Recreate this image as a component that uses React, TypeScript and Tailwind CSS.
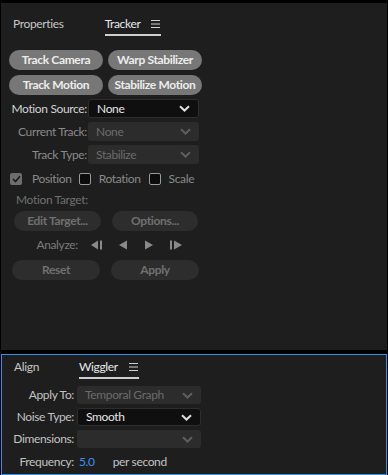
import React from "react";

const font = { fontFamily: "Lato, 'Open Sans', sans-serif", letterSpacing: "-0.35px" };

function Chevron({ color }: { color: string }) {
  return (
    <svg width="11" height="7" viewBox="0 0 11 7" className="shrink-0">
      <path d="M1 1.2 L5.5 5.5 L10 1.2" fill="none" stroke={color} strokeWidth="2" />
    </svg>
  );
}

function Hamburger() {
  return (
    <svg width="9" height="8" viewBox="0 0 9 8" className="ml-[11px]">
      <path d="M0 0.5H9M0 4H9M0 7.5H9" stroke="#cfcfcf" strokeWidth="1" />
    </svg>
  );
}

function Select({ value, disabled, width, height }: { value: string; disabled?: boolean; width: string; height: string }) {
  return (
    <div
      className={
        "rounded-[3px] flex items-center justify-between pl-[8px] pr-[8px] text-[12px] " +
        width +
        " " +
        height +
        (disabled
          ? " bg-[#2c2c2c] text-[#6b6b6b]"
          : " bg-[#0f0f0f] border border-[#2e2e2e] text-[#e6e6e6]")
      }
    >
      <span>{value}</span>
      <Chevron color={disabled ? "#5e5e5e" : "#e0e0e0"} />
    </div>
  );
}

function PillButton({ label, disabled, width }: { label: string; disabled?: boolean; width: string }) {
  return (
    <div
      className={
        "h-[20px] rounded-full flex items-center justify-center text-[12px] font-bold " +
        width +
        (disabled ? " bg-[#2d2d2d] text-[#707070]" : " bg-[#777777] text-[#ececec]")
      }
    >
      {label}
    </div>
  );
}

function Check({ checked }: { checked?: boolean }) {
  return checked ? (
    <div className="w-[12px] h-[12px] rounded-[2px] bg-[#6e6e6e] flex items-center justify-center">
      <svg width="9" height="8" viewBox="0 0 9 8">
        <path d="M1 4 L3.5 6.5 L8 1.2" fill="none" stroke="#1a1a1a" strokeWidth="1.6" />
      </svg>
    </div>
  ) : (
    <div className="w-[12px] h-[12px] rounded-[2px] bg-[#0c0c0c] border border-[#9a9a9a]" />
  );
}

export default function App() {
  return (
    <div className="w-[388px] h-[475px] bg-black flex flex-col pt-[3px]" style={font}>
      {/* Tracker panel */}
      <div className="h-[347px] mx-[1px] bg-[#1e1e1e] flex flex-col">
        <div className="flex items-end h-[33px] pl-[12px]">
          <div className="text-[12px] text-[#c6c6c6] pb-[3px]">Properties</div>
          <div className="ml-[41px] flex items-center border-b-2 border-[#cfcfcf] pb-[1px] pr-[1px]">
            <span className="text-[12px] text-[#e8e8e8]">Tracker</span>
            <Hamburger />
          </div>
        </div>

        <div className="flex flex-col gap-[5px] pl-[8px] mt-[14px]">
          <div className="flex gap-[5px]">
            <PillButton label="Track Camera" width="w-[94px]" />
            <PillButton label="Warp Stabilizer" width="w-[94px]" />
          </div>
          <div className="flex gap-[5px]">
            <PillButton label="Track Motion" width="w-[94px]" />
            <PillButton label="Stabilize Motion" width="w-[94px]" />
          </div>
        </div>

        <div className="flex flex-col gap-[4px] mt-[4px]">
          <div className="flex items-center">
            <div className="w-[87px] text-right pr-[1px] text-[12px] text-[#d2d2d2]">Motion Source:</div>
            <Select value="None" width="w-[111px]" height="h-[19px]" />
          </div>
          <div className="flex items-center">
            <div className="w-[87px] text-right pr-[1px] text-[12px] text-[#8a8a8a]">Current Track:</div>
            <Select value="None" disabled width="w-[111px]" height="h-[19px]" />
          </div>
          <div className="flex items-center">
            <div className="w-[87px] text-right pr-[1px] text-[12px] text-[#8a8a8a]">Track Type:</div>
            <Select value="Stabilize" disabled width="w-[111px]" height="h-[19px]" />
          </div>
        </div>

        <div className="flex items-center pl-[9px] mt-[6px] text-[12px] text-[#8a8a8a]">
          <Check checked />
          <span className="ml-[10px]">Position</span>
          <span className="ml-[7px]"><Check /></span>
          <span className="ml-[8px]">Rotation</span>
          <span className="ml-[8px]"><Check /></span>
          <span className="ml-[8px]">Scale</span>
        </div>

        <div className="pl-[15px] mt-[3px] text-[12px] text-[#6f6f6f]">Motion Target:</div>

        <div className="flex gap-[11px] pl-[13px] mt-[2px]">
          <PillButton label="Edit Target..." disabled width="w-[87px]" />
          <PillButton label="Options..." disabled width="w-[86px]" />
        </div>

        <div className="flex items-center mt-[5px] h-[18px]">
          <div className="w-[77px] text-right text-[12px] text-[#7a7a7a]">Analyze:</div>
          <svg width="100" height="12" viewBox="0 0 100 12" className="ml-[13px]">
            <g fill="#8a8a8a">
              <path d="M0 6 L7 1.5 L7 10.5 Z" />
              <rect x="9" y="1.5" width="2" height="9" />
              <path d="M28 6 L36 1.5 L36 10.5 Z" />
              <path d="M54 1.5 L54 10.5 L62 6 Z" />
              <rect x="79" y="1.5" width="2" height="9" />
              <path d="M83 1.5 L83 10.5 L91 6 Z" />
            </g>
          </svg>
        </div>

        <div className="flex gap-[11px] pl-[11px] mt-[6px]">
          <PillButton label="Reset" disabled width="w-[88px]" />
          <PillButton label="Apply" disabled width="w-[88px]" />
        </div>
      </div>

      {/* Wiggler panel */}
      <div className="mt-[4px] h-[121px] mx-[1px] bg-[#1e1e1e] border border-[#3a8fe8] flex flex-col">
        <div className="flex items-end h-[24px] pl-[12px]">
          <div className="text-[12px] text-[#c6c6c6] pb-[3px]">Align</div>
          <div className="ml-[40px] flex items-center border-b-2 border-[#cfcfcf] pb-[1px] pr-[1px]">
            <span className="text-[12px] text-[#e8e8e8]">Wiggler</span>
            <Hamburger />
          </div>
        </div>

        <div className="flex flex-col gap-[4px] mt-[7px]">
          <div className="flex items-center">
            <div className="w-[72px] text-right text-[12px] text-[#c2c2c2]">Apply To:</div>
            <div className="ml-[3px]">
              <Select value="Temporal Graph" disabled width="w-[124px]" height="h-[18px]" />
            </div>
          </div>
          <div className="flex items-center">
            <div className="w-[72px] text-right text-[12px] text-[#c2c2c2]">Noise Type:</div>
            <div className="ml-[3px]">
              <Select value="Smooth" width="w-[124px]" height="h-[18px]" />
            </div>
          </div>
          <div className="flex items-center">
            <div className="w-[72px] text-right text-[12px] text-[#c2c2c2]">Dimensions:</div>
            <div className="ml-[3px]">
              <Select value="" disabled width="w-[124px]" height="h-[18px]" />
            </div>
          </div>
        </div>

        <div className="flex items-center mt-[5px] text-[12px]">
          <div className="w-[72px] text-right text-[#c2c2c2]">Frequency:</div>
          <span className="ml-[5px] text-[#3d8ff0]">5.0</span>
          <span className="ml-[18px] text-[#c2c2c2]">per second</span>
        </div>
      </div>
    </div>
  );
}
